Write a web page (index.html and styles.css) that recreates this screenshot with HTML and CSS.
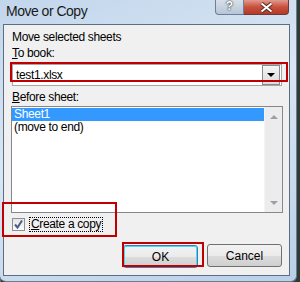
FILE: index.html
```html
<!DOCTYPE html>
<html lang="en">
<head>
  <meta charset="UTF-8" />
  <title>Move or Copy</title>
  <link rel="stylesheet" href="styles.css">
</head>
<body>

  <div class="janela">
    <!-- barra de titulo -->
    <div class="titulo">
      <span class="titulo-texto">Move or Copy</span>
      <div class="titulo-botoes">
        <div class="btn-ajuda">?</div>
        <div class="btn-fechar">
          <svg width="13" height="11" viewBox="0 0 13 11">
            <path d="M1.5 1.5 L11.5 9.5 M11.5 1.5 L1.5 9.5" stroke="#5a2a25" stroke-width="4" />
            <path d="M1.5 1.5 L11.5 9.5 M11.5 1.5 L1.5 9.5" stroke="#fff" stroke-width="2" />
          </svg>
        </div>
      </div>
    </div>

    <div class="cliente">
      <p class="rotulo rotulo-topo">Move selected sheets</p>
      <p class="rotulo rotulo-livro"><u>T</u>o book:</p>

      <div class="combo">
        <span class="combo-texto">test1.xlsx</span>
        <div class="combo-seta"><span class="triangulo-baixo"></span></div>
      </div>

      <p class="rotulo rotulo-antes"><u>B</u>efore sheet:</p>

      <div class="lista">
        <div class="lista-itens">
          <div class="item selecionado">Sheet1</div>
          <div class="item">(move to end)</div>
        </div>
        <div class="rolagem">
          <span class="seta-cima"></span>
          <span class="seta-baixo"></span>
        </div>
      </div>

      <div class="copia">
        <span class="caixa">
          <svg width="11" height="11" viewBox="0 0 11 11">
            <path d="M2 5.5 L4.5 8.5 L9 1.5" fill="none" stroke="#4b5d8c" stroke-width="2" />
          </svg>
        </span>
        <span class="copia-texto"><u>C</u>reate a copy</span>
      </div>

      <div class="botoes">
        <button class="botao botao-ok">OK</button>
        <button class="botao">Cancel</button>
      </div>

      <!-- marcacoes vermelhas -->
      <div class="marca marca-combo"></div>
      <div class="marca marca-copia"></div>
      <div class="marca marca-ok"></div>
    </div>
  </div>

</body>
</html>
```

FILE: styles.css
```css
body {
  margin: 0;
  width: 300px;
  height: 282px;
  overflow: hidden;
  background: linear-gradient(90deg, #5d6b63 0, #5d6b63 1px, #2f3b33 1px);
  font-family: "Liberation Sans", Arial, sans-serif;
}

.janela {
  box-sizing: border-box;
  width: 297px;
  height: 282px;
  padding: 0 6px 5px 3px;
  background: linear-gradient(160deg, #c2d6ec 0%, #d9e6f3 45%, #b9d0e8 100%);
  border-right: 1px solid #6a7d94;
  border-bottom: 1px solid #6a7d94;
  border-radius: 0 0 6px 6px;
  display: flex;
  flex-direction: column;
}

.titulo {
  height: 24px;
  flex-shrink: 0;
  display: flex;
  justify-content: space-between;
  align-items: flex-start;
}

.titulo-texto {
  font-size: 14px;
  letter-spacing: -0.5px;
  color: #1a1a1a;
  margin: 3px 0 0 3px;
}

.titulo-botoes {
  display: flex;
  margin-right: 1px;
}

.btn-ajuda {
  width: 27px;
  height: 14px;
  border: 1px solid #6d7f98;
  border-top: none;
  border-radius: 0 0 0 4px;
  background: linear-gradient(#d7e0ea, #b7c5d6);
  color: #fff;
  font-weight: bold;
  font-size: 12px;
  text-align: center;
  line-height: 13px;
  text-shadow: 0 0 2px #333, 0 0 1px #333;
}

.btn-fechar {
  width: 44px;
  height: 14px;
  border: 1px solid #6d3a35;
  border-top: none;
  border-left: none;
  border-radius: 0 0 4px 0;
  background: linear-gradient(#e09a8c, #c8503e 50%, #b53a28);
  display: flex;
  justify-content: center;
  align-items: center;
}

.cliente {
  position: relative;
  flex: 1;
  border: 1px solid #5e6e82;
  background: #f0f0f0;
  padding: 0 7px 0 8px;
  font-size: 12px;
  letter-spacing: -0.35px;
  color: #000;
}

.rotulo {
  margin: 0;
  height: 15px;
  line-height: 15px;
}

.rotulo-topo {
  margin-top: 5px;
}

.rotulo-livro {
  margin-top: 1px;
}

.combo {
  margin-top: 3px;
  height: 20px;
  border: 1px solid #a6a6a6;
  background: #fff;
  display: flex;
  justify-content: space-between;
  align-items: center;
}

.combo-texto {
  padding-left: 3px;
}

.combo-seta {
  width: 16px;
  height: 18px;
  margin-right: 1px;
  border: 1px solid #8a8a8a;
  background: linear-gradient(#f4f4f4, #dcdcdc);
  display: flex;
  justify-content: center;
  align-items: center;
}

.triangulo-baixo {
  border-left: 4px solid transparent;
  border-right: 4px solid transparent;
  border-top: 4px solid #000;
}

.rotulo-antes {
  margin-top: 4px;
}

.lista {
  margin-top: 1px;
  margin-left: -1px;
  margin-right: -1px;
  height: 105px;
  border: 1px solid #828790;
  background: #fff;
  display: flex;
}

.lista-itens {
  flex: 1;
  padding-top: 1px;
}

.item {
  height: 13px;
  line-height: 13px;
  padding-left: 2px;
}

.item.selecionado {
  background: #3399ff;
  color: #fff;
}

.rolagem {
  width: 17px;
  background: #ececec;
  border-left: 1px solid #f4f4f4;
  display: flex;
  flex-direction: column;
  justify-content: space-between;
  align-items: center;
  padding: 8px 0 7px;
}

.seta-cima {
  border-left: 4px solid transparent;
  border-right: 4px solid transparent;
  border-bottom: 4px solid #a0a0a0;
}

.seta-baixo {
  border-left: 4px solid transparent;
  border-right: 4px solid transparent;
  border-top: 4px solid #a0a0a0;
}

.copia {
  margin-top: 4px;
  display: flex;
  align-items: center;
  height: 14px;
}

.caixa {
  width: 11px;
  height: 11px;
  border: 1px solid #8f8f8f;
  background: linear-gradient(#e6e6e6, #fafafa);
  display: flex;
}

.copia-texto {
  margin-left: 5px;
  padding: 0 1px;
  outline: 1px dotted #000;
  line-height: 13px;
}

.botoes {
  margin-top: 13px;
  display: flex;
  justify-content: flex-end;
  gap: 9px;
}

.botao {
  box-sizing: border-box;
  width: 75px;
  height: 23px;
  border: 1px solid #707070;
  border-radius: 3px;
  background: linear-gradient(#f2f2f2 0%, #ebebeb 50%, #dddddd 51%, #cfcfcf 100%);
  font-family: "Liberation Sans", Arial, sans-serif;
  font-size: 12px;
  color: #000;
  padding: 0;
}

.botao-ok {
  margin-top: 1px;
  border-color: #3c7fb1;
  box-shadow: inset 0 0 0 1px #48d8f8;
}

.marca {
  position: absolute;
  border: 2px solid #c00000;
}

.marca-combo {
  left: 6px;
  top: 37px;
  width: 274px;
  height: 16px;
}

.marca-copia {
  left: -2px;
  top: 177px;
  width: 111px;
  height: 31px;
}

.marca-ok {
  left: 118px;
  top: 217px;
  width: 78px;
  height: 21px;
}
```
